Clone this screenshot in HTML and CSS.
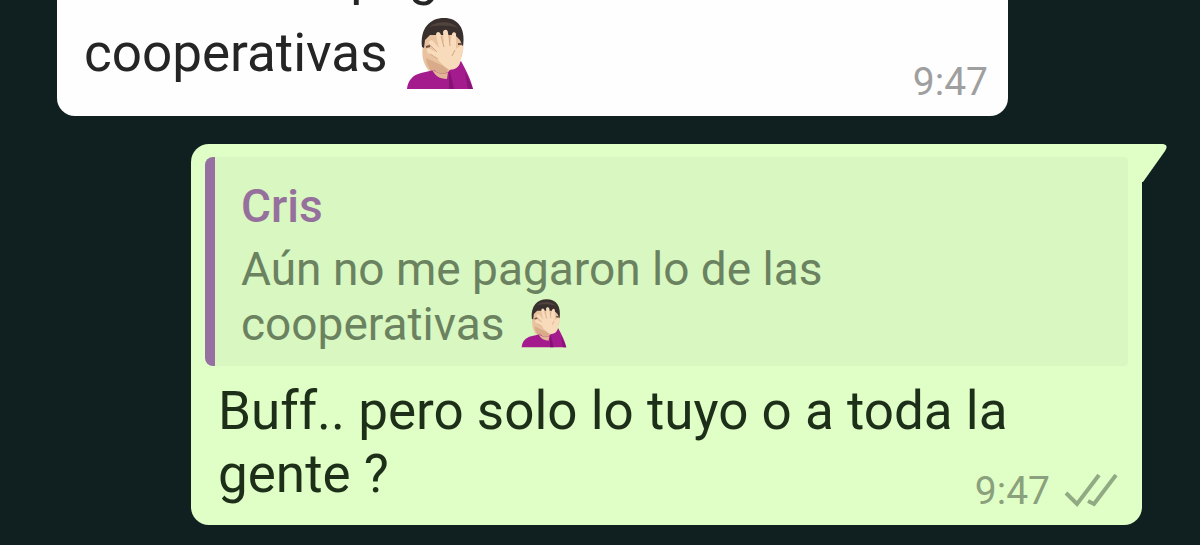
FILE: index.html
```html
<!DOCTYPE html>
<html lang="es">
<head>
  <meta charset="UTF-8" />
  <meta name="viewport" content="width=device-width, initial-scale=1" />
  <title>Chat</title>
  <link rel="stylesheet" href="styles.css">
</head>
<body>
  <svg class="defs" aria-hidden="true">
    <symbol id="facepalm" viewBox="0 0 68 72">
      <path d="M17 28 C14 43 22 57 33 58 C46 59 57 45 57 29 L54 13 L20 13 Z" fill="#e9c3a0"/>
      <path d="M20 40 C21 50 27 57 34 58 L41 59 L42 50 Z" fill="#d9ab8b"/>
      <path d="M16 29 C14 10 24 0 38 0 C52 0 60 10 57 29 L54 22 L49 17 L24 17 L19 22 L18 30 Z" fill="#39302e"/>
      <path d="M23 9 C30 3 45 2 52 10 C44 7 32 7 23 9 Z" fill="#51443f"/>
      <path d="M1 71 C2 62 7 57 15 55 L28 52 C33 57 40 57 44 52 L55 43 C60 52 65 62 67 71 Z" fill="#a31b8c"/>
      <path d="M43 52 L43 71 L48 71 C46 62 45 57 43 52 Z" fill="#841274"/>
      <path d="M59 54 L67 71 L62 71 Z" fill="#871476"/>
      <path d="M26 51 C31 56 39 57 42 54 L41 61 C33 61 28 57 26 51 Z" fill="#e0b695"/>
      <path d="M23 26 C22 22 26 21 28 24 L33 30 L30 17 C30 13 34 13 35 17 L38 26 L37 14 C38 11 42 11 42 15 L44 26 L46 16 C47 13 51 14 50 18 L50 31 L54 28 C58 27 59 30 56 34 L54 45 C52 51 45 54 39 49 L31 41 L22 35 C19 31 22 29 26 32 L30 34 Z" fill="#f8dbba"/>
      <path d="M23 26 L31 34 M35 18 L38 29 M43 17 L44 28 M49 32 L46 38 M24 36 L32 41" fill="none" stroke="#d5a583" stroke-width="1"/>
      <path d="M20 29 L24 28 M52 26 L56 26" fill="none" stroke="#715040" stroke-width="2"/>
    </symbol>
  </svg>

  <main class="chat">
    <article class="bubble bubble-in">
      <p class="text">Aún no me pagaron lo de las cooperativas <svg class="emoji" role="img" aria-label="Facepalm"><use href="#facepalm"/></svg>
        <span class="meta"><time>9:47</time></span>
      </p>
    </article>

    <article class="bubble bubble-out">
      <svg class="tail" viewBox="0 0 26 38" aria-hidden="true">
        <path d="M0 0 H21 Q27 1 23 7 L1 38 H0 Z" fill="#e0ffc7"/>
      </svg>
      <blockquote class="quote">
        <div class="quote-name">Cris</div>
        <p class="quote-text">Aún no me pagaron lo de las cooperativas <svg class="emoji" role="img" aria-label="Facepalm"><use href="#facepalm"/></svg></p>
      </blockquote>
      <p class="text">Buff.. pero solo lo tuyo o a toda la gente ?
        <span class="meta">
          <time>9:47</time>
          <svg class="ticks" viewBox="0 0 54 34" role="img" aria-label="Entregado">
            <path d="M2 19 L13 30 L35 1 M24 27 L30 30 L52 1" fill="none" stroke="#91aa83" stroke-width="4"/>
          </svg>
        </span>
      </p>
    </article>
  </main>
</body>
</html>
```

FILE: styles.css
```css
* {
  margin: 0; padding: 0; box-sizing: border-box;
}
html, body {
  height: 100%;
  overflow: hidden;
  background: #102021;
  font-family: Roboto, "Liberation Sans", sans-serif;
}
.defs {
  display: none;
}
/* newest message sits at the bottom, older ones run off the top */
.chat {
  height: 100%;
  display: flex;
  flex-direction: column;
  justify-content: flex-end;
  gap: 28px;
  padding: 0 58px 20px 57px;
}
.bubble {
  position: relative;
  flex: none;
  width: calc(100% - 134px);
  border-radius: 18px;
}
.bubble-in {
  background: #fefefe;
  padding: 12px 14px 10px;
  color: #252525;
}
.bubble-out {
  align-self: flex-end;
  background: #e0ffc7;
  padding: 13px 14px 10px;
  border-top-right-radius: 0;
  color: #1d2f18;
}
.tail {
  position: absolute;
  top: 0;
  left: 100%;
  width: 26px;
  height: 38px;
}
.text {
  display: flow-root;
  padding: 0 6px 0 13px;
  font-size: 53px;
  line-height: 63px;
}
.quote {
  border-left: 10px solid #9670a0;
  border-radius: 8px 4px 4px 8px;
  background: #d9f7c0;
  padding: 21px 48px 14px 26px;
  margin-bottom: 14px;
}
.quote-name {
  font-size: 46px;
  line-height: 56px;
  font-weight: 500;
  color: #96709c;
  margin-bottom: 8px;
}
.quote-text {
  font-size: 46px;
  line-height: 55px;
  color: #6b8261;
}
.emoji {
  width: 68px;
  height: 72px;
  margin: 10px 0 0 5px;
  vertical-align: -19px;
}
.quote-text .emoji {
  width: 46px;
  height: 49px;
  margin-top: 0;
  vertical-align: -8px;
}
.meta {
  float: right;
  display: flex;
  align-items: center;
  gap: 14px;
  margin-top: 24px;
  font-size: 39px;
  line-height: 48px;
  color: #9f9f9f;
}
.bubble-in .meta {
  margin-top: 50px;
}
.bubble-out .meta {
  color: #8ba07c;
  padding-right: 4px;
}
.ticks {
  width: 54px;
  height: 34px;
}
```
